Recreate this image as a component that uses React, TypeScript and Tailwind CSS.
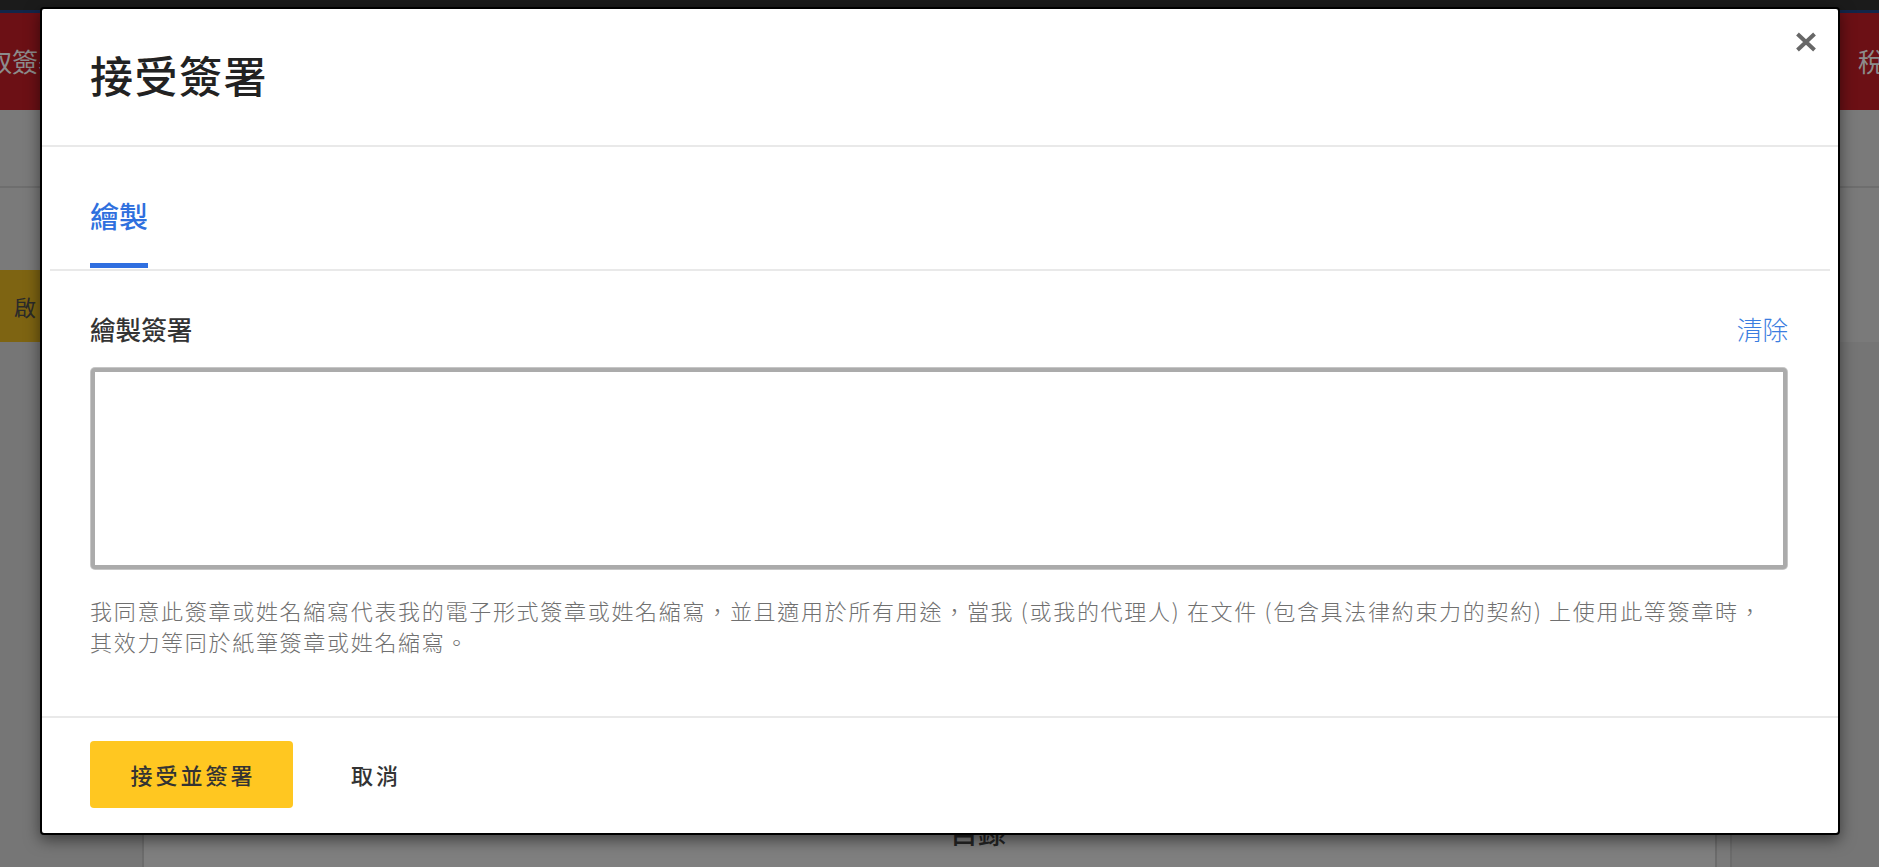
import React from "react";

export default function App() {
  return (
    <div className="relative w-[1879px] h-[867px] overflow-hidden bg-[#7a7a7a] font-['Noto_Sans_CJK_TC','Noto_Sans',sans-serif]">
      {/* Background page (dimmed by overlay) */}
      <div className="h-[10px] bg-[#1b1b1b]" />
      <div className="h-[3px] bg-[#13264a]" />
      <div className="h-[97px] bg-[#6c1015] flex items-center">
        <div className="ml-[-14px] text-[26px] leading-[36px] text-[#8c8c8c] whitespace-nowrap pb-[2px]">取簽署文件</div>
        <div className="ml-auto w-[21px] overflow-hidden text-[26px] leading-[36px] text-[#8c8c8c] whitespace-nowrap pb-[2px]">稅務</div>
      </div>
      <div className="h-[78px] border-b-2 border-[#6e6e6e]" />
      <div className="h-[82px]" />
      <div className="h-[72px] flex">
        <div className="w-[80px] bg-[#7e6412] flex items-center pl-[14px] text-[22px] text-[#2a2a2a]">啟</div>
      </div>
      <div className="flex h-[525px]">
        <div className="w-[142px] bg-[#767676]" />
        <div className="w-[1575px] bg-[#7f7f7f] border-x-2 border-[#6c6c6c] pt-[470px] pl-[806px]">
          <div className="text-[28px] leading-[40px] font-medium text-[#242424]">目錄</div>
        </div>
        <div className="w-[13px] bg-[#7a7a7a]" />
        <div className="flex-1 bg-[#757575] border-l-2 border-[#6c6c6c]" />
      </div>

      {/* Modal */}
      <div className="absolute left-[40px] top-[7px] w-[1800px] h-[828px] bg-white border-2 border-black rounded-[4px] shadow-[0_5px_15px_rgba(0,0,0,0.5)] flex flex-col">
        <svg
          className="absolute right-[21px] top-[23px]"
          width="22"
          height="20"
          viewBox="0 0 22 20"
        >
          <path d="M2.5 2 L19.5 18 M19.5 2 L2.5 18" stroke="#676767" strokeWidth="4" fill="none" />
        </svg>

        <div className="h-[138px] shrink-0 border-b-2 border-[#e9e9e9] flex items-center px-[48px] pb-[6px]">
          <h1 className="text-[43px] leading-[52px] tracking-[1.5px] font-medium text-[#222]">接受簽署</h1>
        </div>

        <div className="flex-1 flex flex-col">
          <div className="mx-[8px] border-b-2 border-[#e9e9e9] pt-[48px] pl-[40px]">
            <div className="inline-block text-[29px] leading-[40px] text-[#2f70de] font-medium pb-[28px] border-b-[5px] border-[#2f6fe0] mb-[1px]">
              繪製
            </div>
          </div>

          <div className="pl-[48px] pr-[50px]">
            <div className="flex justify-between items-center pt-[40px] text-[25.6px] leading-[36px]">
              <span className="font-medium text-[#333]">繪製簽署</span>
              <span className="text-[#3b7de0] font-light">清除</span>
            </div>
            <div className="mt-[21px] mx-[1px] h-[201px] rounded-[4px] border-[4px] border-[#ababab] shadow-[0_0_0_1px_#c6c6c6] bg-white" />
            <p className="mt-[26px] text-[22px] leading-[31.2px] tracking-[1.7px] text-[#707070] font-light whitespace-nowrap">
              我同意此簽章或姓名縮寫代表我的電子形式簽章或姓名縮寫，並且適用於所有用途，當我 (或我的代理人) 在文件 (包含具法律約束力的契約) 上使用此等簽章時，
              <br />
              其效力等同於紙筆簽章或姓名縮寫。
            </p>
          </div>
        </div>

        <div className="h-[117px] shrink-0 border-t-2 border-[#e9e9e9] px-[48px] pt-[23px] flex items-start">
          <button className="w-[203px] h-[67px] rounded-[4px] bg-[#ffc721] text-[22px] tracking-[3px] font-medium text-[#333] pl-[3px]">
            接受並簽署
          </button>
          <button className="h-[67px] ml-[29px] px-[29px] text-[22px] tracking-[3px] font-medium text-[#333]">
            取消
          </button>
        </div>
      </div>
    </div>
  );
}
